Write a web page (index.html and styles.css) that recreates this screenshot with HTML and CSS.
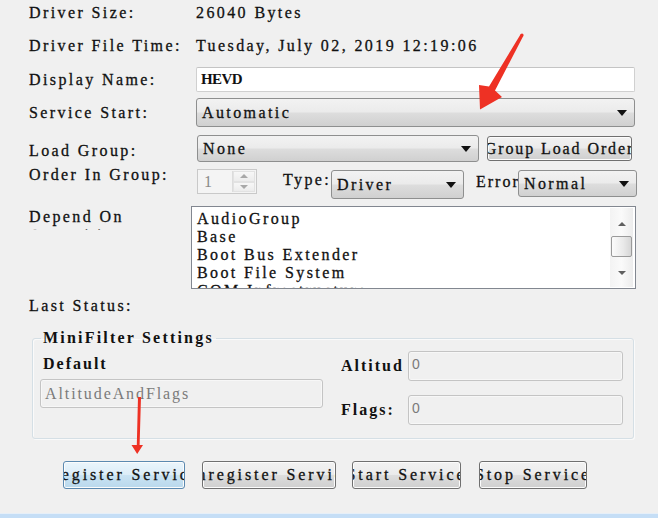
FILE: index.html
```html
<!DOCTYPE html>
<html>
<head>
<meta charset="utf-8">
<link rel="stylesheet" href="styles.css">
</head>
<body>
<div class="dlg">
  <div class="row r1"><span class="lbl">Driver Size:</span><span class="val">26040 Bytes</span></div>
  <div class="row r2"><span class="lbl">Driver File Time:</span><span class="val">Tuesday, July 02, 2019 12:19:06</span></div>
  <div class="row r3"><span class="lbl">Display Name:</span><div class="tb tb-name"><span class="hevd">HEVD</span></div></div>
  <div class="row r4"><span class="lbl">Service Start:</span><div class="combo c-start"><span>Automatic</span><i class="arr"></i></div></div>
  <div class="row r5"><span class="lbl">Load Group:</span><div class="combo c-group"><span>None</span><i class="arr"></i></div><div class="btn b-order"><span>Group Load Order</span></div></div>
  <div class="row r6">
    <span class="lbl">Order In Group:</span>
    <div class="spin"><span class="spin-val">1</span><div class="spin-btns"><div class="sb"><i class="up"></i></div><div class="sb"><i class="down"></i></div></div></div>
    <span class="lbl2 l-type">Type:</span>
    <div class="combo c-type"><span>Driver</span><i class="arr"></i></div>
    <span class="lbl2 l-err">Error</span>
    <div class="combo c-err"><span>Normal</span><i class="arr"></i></div>
  </div>
  <div class="row r7">
    <div class="lbl dep">Depend On<br>Group(s):</div>
    <div class="list">
      <div class="items">
        <div>AudioGroup</div>
        <div>Base</div>
        <div>Boot Bus Extender</div>
        <div>Boot File System</div>
        <div>COM Infrastructure</div>
      </div>
      <div class="sbar"><i class="up2"></i><div class="thumb"></div><i class="down2"></i></div>
    </div>
  </div>
  <div class="row r8"><span class="lbl">Last Status:</span></div>
  <fieldset class="group">
    <legend>MiniFilter Settings</legend>
    <div class="gbody">
      <div class="gleft">
        <div class="bold def">Default</div>
        <div class="tb dis"><span>AltitudeAndFlags</span></div>
      </div>
      <div class="gright">
        <div class="grow ga"><span class="bold glbl">Altitud</span><div class="tb dis num"><span>0</span></div></div>
        <div class="grow gf"><span class="bold glbl">Flags:</span><div class="tb dis num"><span>0</span></div></div>
      </div>
    </div>
  </fieldset>
  <div class="btns">
    <div class="btn b1 focus"><span>Register Service</span></div>
    <div class="btn b2"><span>Unregister Service</span></div>
    <div class="btn b3"><span>Start Service</span></div>
    <div class="btn b4"><span>Stop Service</span></div>
  </div>
</div>
<div class="strip"></div>
<svg class="notes" width="658" height="518" viewBox="0 0 658 518">
  <polygon fill="#ee3124" points="520.6,34.2 523.4,35.8 495,90.5 502,97 480,109.5 479,85 489,86.5"/>
  <circle fill="#ee3124" cx="522" cy="35" r="1.6"/>
  <polygon fill="#ee3124" points="138,397 141,397 139.6,445 143,445 137.2,454 131.5,445 136.8,445"/>
</svg>
</body>
</html>
```

FILE: styles.css
```css
* { box-sizing: border-box; }
body {
  margin: 0;
  width: 658px;
  height: 518px;
  overflow: hidden;
  position: relative;
  background: #f0f0f0;
  font-family: "Liberation Serif", serif;
  font-size: 16px;
  letter-spacing: 2.4px;
  color: #111;
  -webkit-text-stroke: 0.3px #111;
}
.dlg { padding-left: 29px; }
.row { display: flex; align-items: center; }
.lbl { width: 167px; flex: none; white-space: nowrap; }
.val { white-space: nowrap; }

.r1 { height: 26px; }
.r2 { margin-top: 7px; height: 26px; }
.r3 { margin-top: 8px; height: 25px; }
.r4 { margin-top: 6px; height: 29px; }
.r5 { margin-top: 8px; height: 27px; }
.r5 .lbl { padding-top: 4px; }
.r6 { margin-top: 7px; height: 30px; align-items: flex-start; }
.r6 .lbl { margin-top: -3px; }
.r7 { margin-top: 7px; height: 83px; align-items: flex-start; }
.r8 { margin-top: 7px; height: 20px; }

/* text box */
.tb {
  background: #fff;
  border: 1px solid #d0d0d0;
  border-top-color: #c4c4c4;
  border-radius: 2px;
  display: flex;
  align-items: center;
  padding-left: 4px;
  white-space: nowrap;
  overflow: hidden;
}
.tb-name { width: 439px; height: 25px; }
.hevd { font-weight: bold; letter-spacing: -0.6px; font-size: 15px; -webkit-text-stroke: 0; }

/* combo */
.combo {
  display: flex;
  align-items: center;
  border: 1px solid #8e8f8f;
  border-radius: 3px;
  background: linear-gradient(#f2f2f2 0%, #ebebeb 48%, #dddddd 52%, #d0d0d0 100%);
  padding-left: 5px;
  white-space: nowrap;
}
.arr {
  margin-left: auto;
  margin-right: 7px;
  width: 0; height: 0;
  border-left: 5px solid transparent;
  border-right: 5px solid transparent;
  border-top: 6px solid #111;
}
.c-start { width: 439px; height: 29px; }
.c-group { width: 282px; height: 27px; margin-left: 1px; }
.c-type { width: 133px; height: 29px; margin-top: 1px; }
.c-err { width: 119px; height: 27px; margin-top: 1px; }

/* buttons */
.btn {
  display: flex;
  align-items: center;
  justify-content: center;
  overflow: hidden;
  white-space: nowrap;
  border: 1px solid #707070;
  border-radius: 3px;
  background: linear-gradient(#f2f2f2 0%, #ebebeb 48%, #dddddd 52%, #cfcfcf 100%);
  box-shadow: inset 0 0 0 1px #fcfcfc;
}
.btn span { flex: none; }
.b-order { width: 145px; height: 25px; margin-left: 8px; letter-spacing: 1.9px; }
.focus {
  border-color: #5b89b0;
  background: linear-gradient(#eaf5fc 0%, #dcedf8 48%, #c9e3f3 52%, #b9d8ec 100%);
}

/* spin */
.spin {
  width: 60px; height: 25px;
  margin-left: 1px;
  border: 1px solid #c9c9c9;
  background: #f4f4f4;
  display: flex;
  align-items: stretch;
}
.spin-val { color: #8a8a8a; padding-left: 6px; display: flex; align-items: center; flex: 1; -webkit-text-stroke: 0; }
.spin-btns { width: 23px; display: flex; flex-direction: column; border-left: 1px solid #dcdcdc; margin: 1px; }
.sb { flex: 1; display: flex; align-items: center; justify-content: center; background: linear-gradient(#f7f7f7, #ececec); border: 1px solid #e2e2e2; }
.up, .down { width: 0; height: 0; border-left: 4px solid transparent; border-right: 4px solid transparent; }
.up { border-bottom: 4px solid #a8a8a8; }
.down { border-top: 4px solid #a8a8a8; }

.lbl2 { white-space: nowrap; padding-top: 2px; }
.l-type { margin-left: 26px; width: 48px; }
.l-err { margin-left: 12px; width: 42px; overflow: hidden; padding-top: 4px; letter-spacing: 2px; }

/* depend on */
.dep { line-height: 19px; height: 23px; overflow: hidden; margin-top: 1px; }
.list {
  margin-left: -5px;
  width: 445px; height: 83px;
  border: 1px solid #828790;
  background: #fff;
  display: flex;
}
.items { flex: 1; padding: 3px 0 0 5px; line-height: 18px; overflow: hidden; }
.items div { white-space: nowrap; }
.sbar {
  width: 23px;
  margin: 1px 2px 1px 0;
  background: linear-gradient(90deg, #f3f3f3, #fafafa, #ececec);
  display: flex;
  flex-direction: column;
  align-items: center;
}
.up2, .down2 { width: 0; height: 0; border-left: 4px solid transparent; border-right: 4px solid transparent; }
.up2 { border-bottom: 4px solid #606060; margin-top: 14px; }
.down2 { border-top: 4px solid #606060; margin-top: 14px; }
.thumb {
  margin-top: 10px;
  width: 21px; height: 21px;
  border: 1px solid #9a9a9a;
  border-radius: 2px;
  background: linear-gradient(90deg, #fbfbfb, #e9e9e9 60%, #d6d6d6);
}

/* group */
.group {
  margin: 13px 0 0 3px;
  padding: 0 0 13px 0;
  width: 602px;
  border: 1px solid #d5dfe5;
  border-radius: 3px;
  box-shadow: inset 1px 1px 0 #fafafa, 1px 1px 0 #fafafa;
  min-width: 0;
}
.group legend {
  margin-left: 8px;
  padding: 0 2px;
  font-weight: bold;
  line-height: 18px;
  letter-spacing: 2.2px;
  -webkit-text-stroke: 0;
}
.bold { font-weight: bold; -webkit-text-stroke: 0; letter-spacing: 2px; }
.gbody { display: flex; }
.gleft { margin-left: 7px; width: 283px; }
.def { margin-top: 8px; height: 18px; line-height: 18px; margin-left: 3px; }
.dis {
  background: #f0f0f0;
  border: 1px solid #c4c4c4;
  border-radius: 3px;
  color: #7a7a7a;
  -webkit-text-stroke: 0;
  box-shadow: inset 0 0 0 1px #f7f7f7;
  letter-spacing: 1.9px;
}
.gleft .dis { margin-top: 6px; height: 29px; }
.gright { margin-left: 18px; }
.grow { display: flex; align-items: center; height: 30px; }
.ga { margin-top: 4px; }
.gf { margin-top: 14px; }
.glbl { width: 67px; white-space: nowrap; overflow: hidden; }
.num { width: 215px; height: 30px; font-family: "Liberation Sans", sans-serif; font-size: 14px; letter-spacing: 0; padding-left: 3px; align-items: flex-start; padding-top: 4px; }

/* bottom buttons */
.btns { display: flex; margin-top: 22px; margin-left: 34px; height: 28px; letter-spacing: 2.9px; }
.btns .btn { height: 28px; }
.b1 { width: 122px; }
.b2 { width: 134px; margin-left: 17px; }
.b3 { width: 109px; margin-left: 16px; }
.b4 { width: 108px; margin-left: 18px; }

.strip {
  position: absolute;
  left: 0; right: 0; bottom: 0;
  height: 5px;
  border-top: 1px solid #e6eff8;
  background: #c5def6;
}
.notes { position: absolute; left: 0; top: 0; pointer-events: none; }
```
